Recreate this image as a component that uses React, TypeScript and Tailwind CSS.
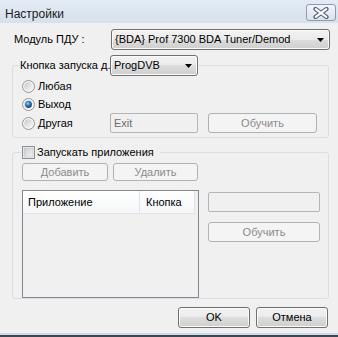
import React from "react";

const btnEnabled =
  "flex items-center justify-center rounded-[3px] border border-[#707070] bg-[linear-gradient(#f2f2f2_0%,#ebebeb_50%,#dddddd_50%,#cfcfcf_100%)] shadow-[inset_0_0_0_1px_#fbfbfb] text-black";
const btnDisabled =
  "flex items-center justify-center rounded-[3px] border border-[#adb2b5] bg-[#f4f4f4] text-[#8b8b8b]";

function Arrow() {
  return (
    <svg width="7" height="4" viewBox="0 0 7 4">
      <path d="M0 0h7L3.5 4z" fill="#000" />
    </svg>
  );
}

function Combo({ text, className }: { text: string; className: string }) {
  return (
    <div className={`${btnEnabled} justify-between! pl-[3px] pr-[5px] ${className}`}>
      <span className="whitespace-nowrap">{text}</span>
      <Arrow />
    </div>
  );
}

function Radio({ checked = false }: { checked?: boolean }) {
  return (
    <svg width="13" height="13" viewBox="0 0 13 13" className="shrink-0">
      <defs>
        <linearGradient id="rg" x1="0" y1="0" x2="1" y2="1">
          <stop offset="0" stopColor="#c8c8c8" />
          <stop offset="1" stopColor="#fbfbfb" />
        </linearGradient>
        <radialGradient id="dot" cx="0.4" cy="0.35" r="0.7">
          <stop offset="0" stopColor="#9fd4f8" />
          <stop offset="0.45" stopColor="#2a7cc0" />
          <stop offset="1" stopColor="#0c3a66" />
        </radialGradient>
      </defs>
      <circle cx="6.5" cy="6.5" r="6" fill="#f4f4f4" stroke="#969696" />
      <circle cx="6.5" cy="6.5" r="4.3" fill="url(#rg)" />
      {checked && <circle cx="6.5" cy="6.5" r="3.4" fill="url(#dot)" />}
    </svg>
  );
}

function Checkbox() {
  return (
    <svg width="13" height="13" viewBox="0 0 13 13" className="shrink-0">
      <defs>
        <linearGradient id="cg" x1="0" y1="0" x2="1" y2="1">
          <stop offset="0" stopColor="#c9cdd2" />
          <stop offset="1" stopColor="#f4f4f4" />
        </linearGradient>
      </defs>
      <rect x="0.5" y="0.5" width="12" height="12" fill="#f6f6f6" stroke="#8e8f8f" />
      <rect x="2" y="2" width="9" height="9" fill="url(#cg)" stroke="#b9bcc0" strokeWidth="0.6" />
    </svg>
  );
}

function CloseGlyph() {
  return (
    <svg width="16" height="12" viewBox="0 0 16 12">
      <path d="M2.5 2l11 8M13.5 2l-11 8" stroke="#56627a" strokeWidth="4.2" strokeLinecap="round" />
      <path d="M2.8 2.2l10.4 7.6M13.2 2.2l-10.4 7.6" stroke="#ffffff" strokeWidth="2.2" strokeLinecap="round" />
    </svg>
  );
}

export default function App() {
  return (
    <div className="flex flex-col w-[338px] h-[337px] overflow-hidden bg-[#f0f0f0] text-[11px] leading-[13px] text-black font-['Liberation_Sans',Arial,sans-serif]">
      {/* Title bar */}
      <div className="flex h-[23px] shrink-0 items-start justify-between bg-[linear-gradient(#e3ebf4,#d6e1ee)]">
        <span className="mt-[7px] ml-[5px] text-[12px] leading-[14px] text-[#1b1b1b]">Настройки</span>
        <div className="mt-[4px] mr-[2px] flex h-[17px] w-[30px] items-center justify-center rounded-[3px] border border-[#8c9bb1] bg-[linear-gradient(#f1f5fa,#d9e3ef)]">
          <CloseGlyph />
        </div>
      </div>

      {/* Модуль ПДУ */}
      <div className="mt-[6px] flex h-[21px] items-center">
        <span className="ml-[14px] w-[97px]">Модуль ПДУ :</span>
        <Combo text="{BDA} Prof 7300 BDA Tuner/Demod" className="h-[21px] w-[219px]" />
      </div>

      {/* Group 1 */}
      <fieldset className="mt-[5px] ml-[12px] w-[317px] rounded-[3px] border border-[#d5dfe5] p-0">
        <legend className="ml-[6px] flex items-center pr-[1px]">
          <span className="w-[91px] pl-[1px] whitespace-nowrap">Кнопка запуска д.</span>
          <Combo text="ProgDVB" className="h-[21px] w-[88px]" />
        </legend>
        <div className="flex flex-col pl-[9px] pt-[4px] pb-[4px]">
          <div className="flex h-[13px] items-center gap-[3px]">
            <Radio />
            <span>Любая</span>
          </div>
          <div className="mt-[5px] flex h-[13px] items-center gap-[3px]">
            <Radio checked />
            <span>Выход</span>
          </div>
          <div className="mt-[2px] flex h-[20px] items-center">
            <div className="flex w-[88px] items-center gap-[3px]">
              <Radio />
              <span>Другая</span>
            </div>
            <div className="flex h-[20px] w-[88px] items-center rounded-[2px] border border-[#b5b5b5] bg-[#f0f0f0] pl-[3px] text-[#6d6d6d]">
              Exit
            </div>
            <div className={`${btnDisabled} ml-[10px] h-[20px] w-[109px]`}>Обучить</div>
          </div>
        </div>
      </fieldset>

      {/* Group 2 */}
      <fieldset className="mt-[7px] ml-[12px] w-[317px] rounded-[3px] border border-[#d5dfe5] p-0">
        <legend className="ml-[8px] flex h-[14px] items-center gap-[2px] pl-[1px] pr-[6px]">
          <Checkbox />
          <span>Запускать приложения</span>
        </legend>
        <div className="flex flex-col pl-[9px] pt-[4px]">
          <div className="flex gap-[5px]">
            <div className={`${btnDisabled} h-[18px] w-[86px]`}>Добавить</div>
            <div className={`${btnDisabled} h-[18px] w-[85px]`}>Удалить</div>
          </div>
          <div className="mt-[9px] flex">
            <div className="flex h-[108px] w-[177px] flex-col border border-[#828790] bg-[#f0f0f0]">
              <div className="flex h-[23px]">
                <div className="flex w-[117px] items-center border-r border-b border-[#e0e3e8] bg-[linear-gradient(#ffffff,#f4f6f8)] pl-[5px]">
                  Приложение
                </div>
                <div className="flex w-[55px] items-center border-r border-b border-[#e0e3e8] bg-[linear-gradient(#ffffff,#f4f6f8)] pl-[6px]">
                  Кнопка
                </div>
              </div>
            </div>
            <div className="ml-[9px] flex flex-col">
              <div className="mt-[2px] h-[20px] w-[112px] rounded-[2px] border border-[#b5b5b5] bg-[#f0f0f0]" />
              <div className={`${btnDisabled} mt-[10px] h-[20px] w-[112px]`}>Обучить</div>
            </div>
          </div>
        </div>
      </fieldset>

      {/* Bottom buttons */}
      <div className="mt-[8px] flex justify-end gap-[6px] pr-[10px]">
        <div className={`${btnEnabled} h-[21px] w-[72px]`}>OK</div>
        <div className={`${btnEnabled} h-[21px] w-[72px]`}>Отмена</div>
      </div>

      <div className="flex-1" />
      <div className="h-[2px] shrink-0 bg-[#cfdbe8]" />
      <div className="h-[2px] shrink-0 bg-[#3d4653]" />
    </div>
  );
}
